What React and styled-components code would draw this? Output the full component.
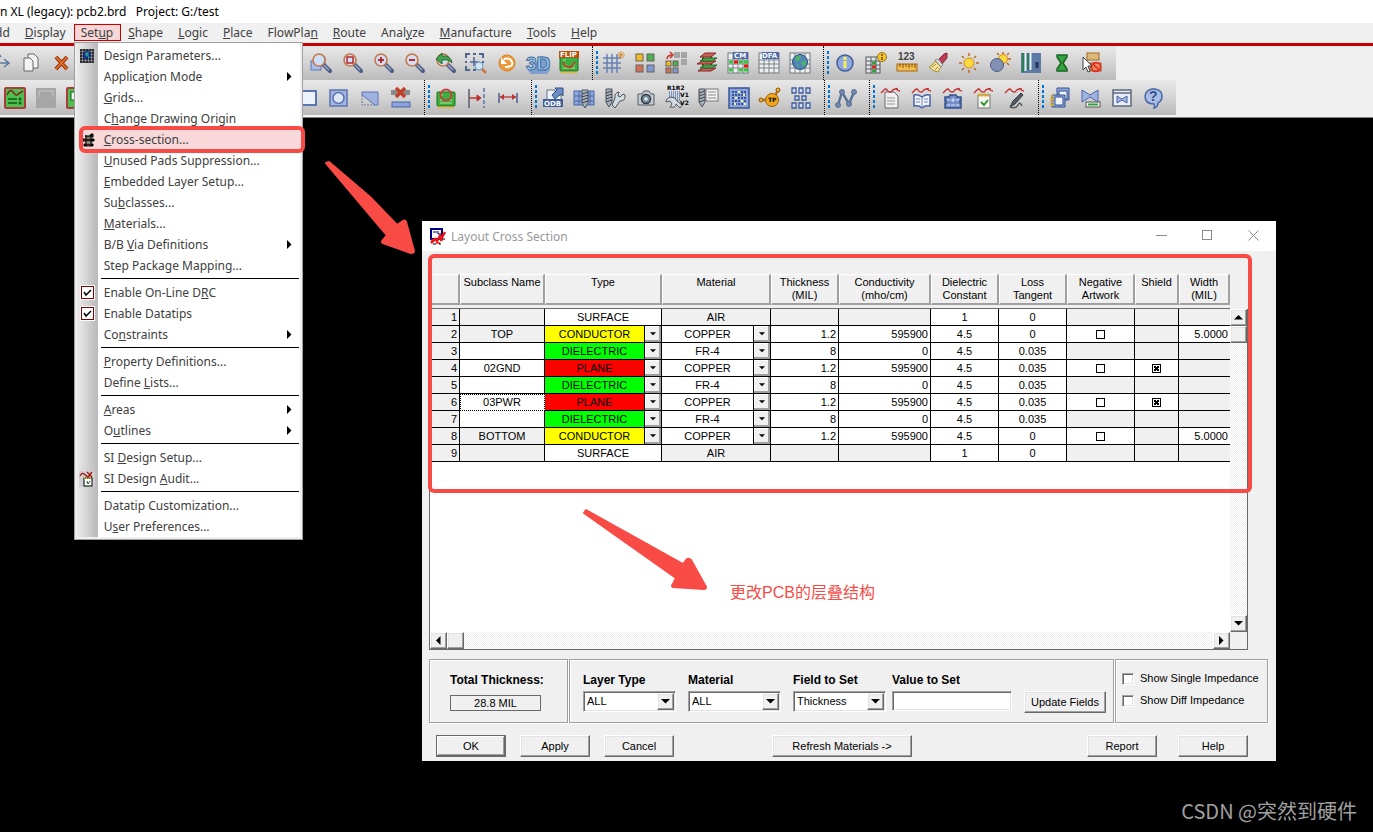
import React, { useState } from 'react';
import styled, { createGlobalStyle, css } from 'styled-components';

const GlobalStyle = createGlobalStyle`
  * {
    box-sizing: border-box;
  }
  body {
    margin: 0;
    background-color: black;
    overflow: hidden;
  }
  button, input, select {
    font: inherit;
    color: inherit;
    margin: 0;
    padding: 0;
  }
`;

const menuFont = css`
  font-family: "Noto Sans", "Open Sans", sans-serif;
  font-size: 12px;
`;

const raised = css`
  background-color: #f0f0f0;
  border: 1px solid;
  border-color: white #696969 #696969 white;
  box-shadow: inset -1px -1px #a0a0a0, inset 1px 1px #e3e3e3;
`;

const sunken = css`
  background-color: white;
  border: 1px solid;
  border-color: #a0a0a0 white white #a0a0a0;
  box-shadow: inset 1px 1px #696969, inset -1px -1px #e3e3e3;
`;

const Page = styled.div`
  position: relative;
  min-height: 100vh;
  background-color: black;
`;

const TitleBar = styled.header`
  height: 23px;
  line-height: 23px;
  background-color: white;
  color: black;
  white-space: pre;
  ${menuFont}
`;

const MenuBar = styled.nav`
  display: flex;
  align-items: flex-start;
  height: 23px;
  padding-top: 1px;
  background-color: #f0f0f0;
  border-bottom: 3px solid #c80000;
  color: #404040;
  ${menuFont}
`;

const MenuEntry = styled.div`
  position: relative;
  &:first-child {
    margin-left: -12px;
  }
`;

const MenuButton = styled.button`
  height: 17px;
  line-height: 15px;
  padding: 0 7px 0 6px;
  border: 1px solid ${({ active }) => (active ? '#c80000' : 'transparent')};
  background-color: ${({ active }) => (active ? '#f6d6d6' : 'transparent')};
`;

const Dropdown = styled.div`
  position: absolute;
  z-index: 5;
  top: 18px;
  left: 0;
  width: 229px;
  padding: 2px 3px 2px 0;
  border: 1px solid #a0a0a0;
  background: linear-gradient(to right, #f0f0f0 0, #b8b8b8 23px, white 23px);
  box-shadow: inset -2px -2px #f0f0f0;
`;

const MenuRow = styled.div`
  display: grid;
  grid-template-columns: 29px 1fr 14px;
  align-items: center;
  height: 21px;
  ${({ active }) =>
    active &&
    `
    position: relative;
    grid-template-columns: 22px 1fr 14px;
    margin: 0 -3px 0 7px;
    padding-right: 3px;
    border-radius: 3px;
    background-color: #f8d8d8;
    outline: 4px solid #f94b46;
    outline-offset: -1px;
  `}
`;

const MenuText = styled.span`
  white-space: nowrap;
  line-height: 21px;
`;

const MenuIcon = styled.span`
  display: flex;
  padding-left: ${({ active }) => (active ? '0' : '4px')};
`;

const MenuRule = styled.hr`
  height: 6px;
  margin: 0 0 0 26px;
  border: 0;
  background: linear-gradient(transparent 2px, black 2px, black 3px, transparent 3px);
`;

const MenuTick = styled.input`
  appearance: none;
  width: 13px;
  height: 13px;
  margin-left: 2px;
  border: 1px solid #800000;
  outline: 1px solid white;
  background-color: white;
`;

const TickMark = styled.svg`
  margin-left: -13px;
  pointer-events: none;
`;

const Toolbars = styled.div`
  background-color: #f0f0f0;
  border-bottom: 1px solid #808080;
  padding-bottom: 2px;
`;

const Toolbar = styled.div`
  display: flex;
  height: ${({ tall }) => (tall ? '35px' : '34px')};
  width: max-content;
  margin-left: ${({ shift }) => shift};
  background: linear-gradient(#e8e8e8, #d4d4d4 50%, #bababa);
`;

const Spacer = styled.div`
  width: ${({ size }) => size}px;
`;

const ToolGroup = styled.div`
  display: flex;
  align-items: center;
  padding-right: 8px;
`;

const Handle = styled.div`
  align-self: stretch;
  width: 6px;
  border-left: 1px dotted black;
  background: repeating-linear-gradient(#0078d7 0 3px, transparent 3px 5px) 3px 5px / 3px 23px no-repeat;
`;

const ToolButton = styled.button`
  display: flex;
  align-items: center;
  align-self: center;
  justify-content: center;
  width: 31px;
  height: 28px;
  border: 0;
  background: none;
`;

const Dialog = styled.section`
  position: absolute;
  top: 221px;
  left: 422px;
  right: 97px;
  background-color: #f0f0f0;
  color: black;
  font-family: "Liberation Sans", Arial, sans-serif;
  font-size: 11px;
  line-height: 13px;
`;

const DialogTitle = styled.div`
  display: flex;
  align-items: center;
  gap: 5px;
  height: 30px;
  padding: 0 0 0 7px;
  background-color: white;
  color: #999999;
  ${menuFont}
`;

const DialogName = styled.h1`
  flex: 1;
  margin: 0;
  font-size: 12px;
  font-weight: normal;
`;

const WindowButton = styled.button`
  display: flex;
  align-items: center;
  justify-content: center;
  width: 46px;
  height: 28px;
  border: 0;
  background: none;
`;

const WindowButtons = styled.div`
  display: flex;
  align-self: flex-start;
`;

const DialogBody = styled.div`
  padding: 23px 8px 4px 7px;
`;

const GridFrame = styled.div`
  position: relative;
  display: grid;
  grid-template-columns: 1fr 18px;
  margin-right: 20px;
`;

const GridMain = styled.div`
  background-color: white;
  border-left: 1px solid #696969;
  min-height: 358px;
`;

const Marker = styled.div`
  position: absolute;
  top: -20px;
  left: -1px;
  right: -4px;
  height: 239px;
  border: 4px solid #f94b46;
  border-radius: 6px;
  pointer-events: none;
`;

const LayerTable = styled.table`
  width: 100%;
  table-layout: fixed;
  border-collapse: separate;
  border-spacing: 0;
`;

const HeadCell = styled.th`
  height: 35px;
  padding: 0 0 3px;
  background-color: #f0f0f0;
  border-bottom: 1px solid #696969;
  font-weight: normal;
  vertical-align: top;
`;

const HeadLabel = styled.div`
  height: 31px;
  padding-top: 1px;
  border: solid;
  border-width: 1px 2px 2px 1px;
  border-color: white #a0a0a0 #a0a0a0 white;
  white-space: pre-line;
`;

const Cell = styled.td`
  height: 17px;
  padding: 0 ${({ align }) => (align === 'right' ? '2px' : '0')} 0 0;
  border: solid black;
  border-width: 0 1px 1px 0;
  background-color: ${({ off }) => (off ? '#f0f0f0' : 'white')};
  text-align: ${({ align }) => align || 'center'};
  line-height: 16px;
  ${({ focused }) =>
    focused && 'border-color: white; outline: 1px dotted black; outline-offset: -1px;'}
  &:last-child {
    border-right: 0;
  }
`;

const CellPick = styled.div`
  position: relative;
  display: flex;
  height: 16px;
`;

const CellSelect = styled.select`
  appearance: none;
  width: 100%;
  height: 16px;
  padding-right: 17px;
  border: 0;
  border-radius: 0;
  background-color: ${({ fill }) => fill};
  line-height: 16px;
  text-align: center;
  text-align-last: center;
`;

const CellArrow = styled.span`
  position: absolute;
  top: 0;
  right: 0;
  display: flex;
  align-items: center;
  justify-content: center;
  width: 17px;
  height: 16px;
  border-left: 1px solid black;
  background-color: #f0f0f0;
  box-shadow: inset -2px -2px #a0a0a0, inset 1px 1px white;
  pointer-events: none;
`;

const CellBox = styled.input`
  appearance: none;
  display: block;
  width: 9px;
  height: 9px;
  margin: 0 auto;
  border: 1px solid black;
  background-color: white;
  &:checked {
    background:
      linear-gradient(45deg, transparent 35%, black 35%, black 65%, transparent 65%) 1px 1px / 5px 5px no-repeat,
      linear-gradient(-45deg, transparent 35%, black 35%, black 65%, transparent 65%) 1px 1px / 5px 5px no-repeat,
      white;
  }
`;

const dither = css`
  background: repeating-conic-gradient(white 0 25%, #f0f0f0 0 50%) 0 0 / 2px 2px;
`;

const VerticalScroll = styled.div`
  display: flex;
  flex-direction: column;
  margin-top: 35px;
  border-right: 1px solid #696969;
  ${dither}
`;

const HorizontalScroll = styled.div`
  display: flex;
  border-left: 1px solid #696969;
  border-bottom: 1px solid #696969;
  ${dither}
`;

const ScrollCorner = styled.div`
  border: solid #696969;
  border-width: 0 1px 1px 0;
  background-color: #f0f0f0;
`;

const ScrollButton = styled.button`
  display: flex;
  align-items: center;
  justify-content: center;
  width: 17px;
  height: 17px;
  ${raised}
`;

const Track = styled.div`
  flex: 1;
`;

const Panels = styled.div`
  display: flex;
  gap: 1px;
  margin-top: 9px;
`;

const Panel = styled.div`
  display: flex;
  height: 64px;
  border: 1px solid #a0a0a0;
  box-shadow: inset 1px 1px white, 1px 1px white;
`;

const TotalPanel = styled(Panel)`
  flex-direction: column;
  width: 139px;
  padding: 13px 0 0 20px;
`;

const SetPanel = styled(Panel)`
  flex: 1;
  align-items: flex-start;
  padding: 13px 7px 0 13px;
`;

const ShowPanel = styled(Panel)`
  flex-direction: column;
  gap: 9px;
  width: 153px;
  padding: 12px 0 0 6px;
`;

const FieldName = styled.label`
  height: 14px;
  font-size: 12px;
  font-weight: bold;
  line-height: 14px;
  white-space: nowrap;
`;

const TotalValue = styled.output`
  width: 91px;
  height: 16px;
  margin-top: 8px;
  border: 1px solid #696969;
  line-height: 14px;
  text-align: center;
`;

const Field = styled.div`
  position: relative;
  display: flex;
  flex-direction: column;
  gap: 4px;
  width: 93px;
  margin-right: 12px;
`;

const ValueField = styled(Field)`
  flex: 1;
  margin-left: -6px;
`;

const Select = styled.select`
  appearance: none;
  height: 21px;
  padding: 0 20px 0 3px;
  border-radius: 0;
  ${sunken}
`;

const SelectArrow = styled.span`
  position: absolute;
  right: 2px;
  bottom: 2px;
  display: flex;
  align-items: center;
  justify-content: center;
  width: 17px;
  height: 17px;
  pointer-events: none;
  ${raised}
`;

const TextBox = styled.input`
  width: 100%;
  height: 20px;
  padding: 0 4px;
  ${sunken}
`;

const Button = styled.button`
  width: ${({ wide }) => (wide ? '140px' : '70px')};
  height: 22px;
  ${raised}
  ${({ main }) =>
    main &&
    `
    border-color: #696969;
    box-shadow: inset -1px -1px #696969, inset 1px 1px white, inset -2px -2px #a0a0a0;
  `}
`;

const UpdateButton = styled(Button)`
  width: 82px;
  margin-top: 18px;
`;

const ShowLine = styled.label`
  display: flex;
  align-items: center;
  gap: 6px;
  height: 13px;
  white-space: nowrap;
`;

const ShowBox = styled.input`
  appearance: none;
  width: 12px;
  height: 12px;
  ${sunken}
`;

const ButtonRow = styled.div`
  display: flex;
  gap: 14px;
  padding: 12px 20px 0 7px;
`;

const MiddleButtons = styled.div`
  margin-left: 84px;
`;

const RightButtons = styled.div`
  display: flex;
  gap: 21px;
  margin-left: auto;
`;

const Arrow = styled.svg`
  position: absolute;
  top: ${({ y }) => y}px;
  left: ${({ x }) => x}px;
  pointer-events: none;
`;

const Note = styled.p`
  position: absolute;
  top: 581px;
  left: 730px;
  margin: 0;
  color: #f94b46;
  font-family: "Liberation Sans", "Noto Sans CJK SC", sans-serif;
  font-size: 16px;
  line-height: 24px;
`;

const Watermark = styled.footer`
  position: absolute;
  right: 16px;
  bottom: 6px;
  color: #a0a0a0;
  font-family: "Noto Sans CJK SC", sans-serif;
  font-size: 20px;
  line-height: 30px;
`;

/* ---- icons, all on a 24 x 24 canvas ---- */

const tiny = { fontFamily: 'DejaVu Sans', fontWeight: 'bold' };

const Lens = ({ children }) => (
  <g>
    <path d="M14 13l7 7" stroke="#4c5a80" strokeWidth="4" strokeLinecap="round" />
    <path d="M15 14l5 5" stroke="#9dabd0" strokeWidth="1.5" />
    <circle cx="10" cy="9" r="6" fill="#cfdff5" stroke="#c57846" strokeWidth="1.6" />
    {children}
  </g>
);

const Board = () => (
  <g>
    <rect x="3" y="6" width="18" height="14" rx="1" fill="#3fae3f" stroke="#16731b" />
    <path d="M4 21.5h16" stroke="#e2b424" strokeWidth="2" strokeDasharray="2 1" />
    <path d="M6 9h3M6 17h12M6 14h4M15 14h3" stroke="#aee69b" />
  </g>
);

const Table = () => (
  <g>
    <rect x="2" y="2" width="20" height="20" fill="#eef0f0" stroke="#707880" />
    <path d="M2 9h20M2 13h20M2 17h20M7 2v20M12 2v20M17 2v20" stroke="#7c838a" />
  </g>
);

const Screw = () => (
  <g>
    <path d="M3 3h6v13l-3 5-3-5z" fill="#aab3bd" stroke="#4b535c" />
    <path d="M3 7l6-2M3 10l6-2M3 13l6-2M3 16l6-2" stroke="#3d444c" />
  </g>
);

const Wave = () => (
  <path d="M2 7q1-1 3-3t3 0 3 2 2-1 3-2 2 0 3 2" fill="none" stroke="#c52f2f" strokeWidth="1.4" />
);

const Grip = ({ x, y, fill }) => (
  <rect x={x} y={y} width="7" height="7" fill={fill} stroke="#66605a" />
);

const ICONS = {
  move: <path d="M2 12h18M16 8l5 4-5 4M10 3v18M7 6l3-4 3 4" stroke="#5c7aa0" strokeWidth="1.6" />,
  copy: (
    <g fill="#f4f4f4" stroke="#666">
      <path d="M9 3h6l4 4v10H9z" />
      <path d="M5 7h6l3 3v10H5z" />
    </g>
  ),
  delete: (
    <g>
      <path d="M6 6l11 12M17 6L6 18" stroke="#8a2f0a" strokeWidth="4" />
      <path d="M6 6l11 12M17 6L6 18" stroke="#e06a25" strokeWidth="2" />
    </g>
  ),
  waveBoard: (
    <g>
      <rect x="2" y="2" width="20" height="20" rx="1" fill="#4fbf4f" stroke="#a83b3b" strokeWidth="2" />
      <path d="M4 9q3-7 6-3t4 3 6-4" stroke="#7d2a1e" strokeWidth="1.5" />
      <path d="M5 13h9M5 17h9" stroke="#145a18" strokeWidth="1.5" />
      <circle cx="17" cy="13" r="1.5" fill="#145a18" />
      <circle cx="17" cy="17" r="1.5" fill="#145a18" />
    </g>
  ),
  disabled: (
    <g>
      <rect x="2" y="2" width="20" height="20" fill="#a6a6a6" />
      <path d="M5 11V5h14v6" stroke="#c8c8c8" />
    </g>
  ),
  greenBoard: (
    <g>
      <rect x="2" y="2" width="20" height="20" rx="1" fill="#4fbf4f" stroke="#a83b3b" strokeWidth="2" />
      <rect x="6" y="6" width="10" height="8" fill="#eef5ee" stroke="#145a18" />
    </g>
  ),
  zoomPoints: (
    <g>
      <path d="M7 6h9v9H7z" fill="#a9bde6" stroke="#5c77b8" />
      <rect x="2" y="10" width="10" height="9" fill="#a9bde6" stroke="#5c77b8" />
      <Lens />
    </g>
  ),
  zoomFit: (
    <Lens>
      <rect x="7" y="6" width="6" height="6" stroke="#b92b2b" strokeWidth="1.5" />
    </Lens>
  ),
  zoomIn: (
    <Lens>
      <path d="M10 6v6M7 9h6" stroke="#b92b2b" strokeWidth="2" />
    </Lens>
  ),
  zoomOut: (
    <Lens>
      <path d="M7 9h6" stroke="#b92b2b" strokeWidth="2" />
    </Lens>
  ),
  zoomPrevious: (
    <Lens>
      <path d="M3 8l6-6v3q9-1 10 7-3-4-10-3v4z" fill="#43a552" stroke="#1d6a2a" />
    </Lens>
  ),
  zoomCenter: (
    <g>
      <path d="M2 7V3h4M15 3h4v4M2 15v4h4M9 3h3M9 19h3M2 10v2M19 10v2" stroke="#4d6791" strokeWidth="2" />
      <path d="M10 6v9M6 11h9" stroke="#4d6791" strokeWidth="1.5" />
      <circle cx="15" cy="15" r="4" fill="#cfe6f7" stroke="#6a93bd" />
      <path d="M18 18l4 4" stroke="#c57846" strokeWidth="2.5" />
    </g>
  ),
  redraw: (
    <g>
      <circle cx="12" cy="12" r="8" fill="#ee9a3a" stroke="#d98024" />
      <path d="M9 8q6-2 8 3t-7 5" stroke="white" strokeWidth="2" />
      <path d="M6 6v7h6z" fill="white" />
    </g>
  ),
  view3d: (
    <g fontFamily="Liberation Sans" fontWeight="bold" fontSize="19">
      <path d="M15 5l7 1 2 3v10l-3 4H5l-3-3z" fill="#7f9fcd" />
      <text x="0" y="19" fill="#a9cbe8" stroke="#3d6ea5" strokeWidth="1">3D</text>
    </g>
  ),
  flip: (
    <g>
      <Board />
      <path d="M6 11q2 6 8 5l4-5" stroke="#b3472a" strokeWidth="2" />
      <rect x="2" y="0" width="20" height="7" fill="#b5520e" />
      <text x="3" y="6" fontSize="7" fill="white" {...tiny}>FLIP</text>
    </g>
  ),
  gridBurst: (
    <g>
      <path d="M1 7h18M1 12h18M1 17h18M5 3v19M10 3v19M15 3v19" stroke="#6681b5" strokeWidth="1.5" />
      <path d="M19 0v8M15 4h8M16 1l6 6M22 1l-6 6" stroke="#d68f35" />
    </g>
  ),
  fourTiles: (
    <g>
      <Grip x="3" y="3" fill="#f2bc24" />
      <Grip x="14" y="3" fill="#4caf50" />
      <Grip x="3" y="14" fill="#d0705a" />
      <Grip x="14" y="14" fill="#7f98d6" />
    </g>
  ),
  moveTiles: (
    <g>
      <path d="M10 1h6v6h-6zM17 1h6v6h-6zM17 8h6v6h-6z" fill="#a5a5a5" />
      <rect x="2" y="10" width="5" height="5" fill="#f2bc24" stroke="#66605a" />
      <rect x="9" y="10" width="5" height="5" fill="#4caf50" stroke="#66605a" />
      <rect x="2" y="17" width="5" height="5" fill="#d0705a" stroke="#66605a" />
      <rect x="9" y="17" width="5" height="5" fill="#7f98d6" stroke="#66605a" />
      <path d="M3 8q0-4 6-4M6 1l3 3-3 3" stroke="#c43c32" strokeWidth="1.6" />
    </g>
  ),
  layers: (
    <g strokeWidth="1">
      <path d="M8 4v14M16 5v14" stroke="#1d7a2a" strokeWidth="2" />
      <path d="M3 20l5-3h13l-5 3z" fill="#cc6156" stroke="#8a2626" />
      <path d="M5 17l5-3h12l-5 3z" fill="#4caf50" stroke="#1d6a2a" />
      <path d="M2 13l5-3h14l-5 3z" fill="#cc6156" stroke="#8a2626" />
      <path d="M5 10l5-3h12l-5 3z" fill="#4caf50" stroke="#1d6a2a" />
      <path d="M5 6l5-4h11l-5 4z" fill="#cc6156" stroke="#8a2626" />
    </g>
  ),
  cm: (
    <g>
      <Table />
      <path d="M13 11h4M3 11h4M3 19h4M18 11h4M13 19h4M18 19h4" stroke="#32c53c" strokeWidth="3" />
      <path d="M8 11h4M18 15h4" stroke="#ee1010" strokeWidth="3" />
      <rect x="7" y="1" width="15" height="7" fill="#4d6bab" />
      <text x="8" y="7" fontSize="7" fill="white" {...tiny}>CM</text>
    </g>
  ),
  dfa: (
    <g>
      <Table />
      <rect x="5" y="1" width="17" height="7" fill="#4d6bab" />
      <text x="5" y="7" fontSize="7" fill="white" {...tiny}>DFA</text>
    </g>
  ),
  world: (
    <g>
      <Table />
      <circle cx="12" cy="11" r="7.5" fill="#5282bb" stroke="#2c517e" />
      <path d="M7 7q3-4 6-2l-1 4-4 2zM13 11l5-2q1 5-3 7zM8 13l3 1v3z" fill="#4fb268" />
    </g>
  ),
  info: (
    <g>
      <circle cx="12" cy="12" r="8" fill="#8fa9e0" stroke="#415c96" strokeWidth="1.5" />
      <path d="M12 10v7M12 6v3" stroke="#f7ee50" strokeWidth="3" />
    </g>
  ),
  sheetInfo: (
    <g>
      <rect x="2" y="6" width="14" height="16" fill="#e4e6e6" stroke="#565c62" />
      <path d="M2 10h14M2 14h14M2 18h14M7 6v16M12 6v16" stroke="#565c62" />
      <path d="M8 12h4M8 20h4" stroke="#32a53c" strokeWidth="3" />
      <path d="M8 16h4" stroke="#dd2020" strokeWidth="3" />
      <circle cx="18" cy="6" r="4.500" fill="#f3c62e" stroke="#9d7414" />
      <path d="M18 3v2M18 6v3" stroke="#6a4c08" strokeWidth="1.5" />
    </g>
  ),
  measure: (
    <g>
      <text x="3" y="9" fontSize="10" fill="#444" fontFamily="Liberation Sans" fontWeight="bold">123</text>
      <rect x="2" y="13" width="20" height="7" fill="#f2c04a" stroke="#a56418" />
      <path d="M5 13v3M8 13v4M11 13v3M14 13v4M17 13v3M20 13v4" stroke="#80490c" />
    </g>
  ),
  brush: (
    <g>
      <path d="M12 9l6-6 3-1v5l-5 6z" fill="#b93c52" stroke="#8e2438" />
      <path d="M9 9l3-1 5 6-2 2z" fill="#d9dde4" stroke="#8a8f98" />
      <path d="M9 10l6 6-3 5-4-1-5-4q3-1 6-6z" fill="#f2df98" stroke="#a98f3b" />
      <path d="M6 16l4-3M9 19l3-3" stroke="#a98f3b" />
    </g>
  ),
  sun: (
    <g>
      <path d="M12 2v3M12 19v3M2 12h3M19 12h3M5 5l2 2M17 17l2 2M19 5l-2 2M7 17l-2 2" stroke="#bb6a24" strokeWidth="1.5" />
      <circle cx="12" cy="12" r="5" fill="#ffd83a" stroke="#d8891f" />
    </g>
  ),
  eclipse: (
    <g>
      <path d="M15 1v2M20 8h3M19 4l2-2M11 4L9 2M19 12l2 2" stroke="#bb6a24" strokeWidth="1.5" />
      <circle cx="15" cy="8" r="4.5" fill="#ffd83a" stroke="#d8891f" />
      <circle cx="9" cy="14" r="6.5" fill="#8291b3" stroke="#4c5b82" />
    </g>
  ),
  bands: (
    <g>
      <rect x="2" y="2" width="20" height="20" fill="#5d79a6" />
      <path d="M4 2v19M9 2v17" stroke="#2b7d54" strokeWidth="2" />
      <path d="M6.500 2v18M11.500 2v17" stroke="#e6f0f4" strokeWidth="2" />
      <path d="M18 11v6" stroke="#243457" strokeWidth="3" />
    </g>
  ),
  hourglass: <path d="M7 4h10v2l-4 6 4 6v2H7v-2l4-6-4-6z" fill="#35a33f" stroke="#166420" strokeWidth="1.5" />,
  noPick: (
    <g>
      <rect x="6" y="2" width="12" height="7" fill="#dcb878" stroke="#a56a2a" />
      <rect x="9" y="12" width="11" height="8" fill="#e0915a" stroke="#a5502a" />
      <circle cx="15" cy="16" r="4.5" stroke="#f02020" strokeWidth="1.5" />
      <path d="M12 13l6 6" stroke="#f02020" strokeWidth="1.5" />
      <path d="M2 6v13l3-3 2 5 2-1-2-5h4z" fill="white" stroke="#444" />
    </g>
  ),
  shapeRect: <rect x="3" y="5" width="17" height="14" fill="#eef2fa" stroke="#5a74b4" strokeWidth="2" />,
  shapeCircle: (
    <g stroke="#5a74b4" strokeWidth="1.5">
      <rect x="3" y="4" width="17" height="16" fill="#a4b6e0" />
      <circle cx="11.5" cy="12" r="5.5" fill="#dfe6f5" />
    </g>
  ),
  shapeCorner: (
    <g>
      <path d="M4 6h16v13h-3L4 9z" fill="#9fb2df" stroke="#5a74b4" />
      <path d="M4 9v10h13" stroke="#6e7f9e" strokeDasharray="2 1" />
    </g>
  ),
  shapeDelete: (
    <g>
      <rect x="2" y="4" width="19" height="5" fill="#8c8c8c" />
      <path d="M7 2l9 9M16 2l-9 9" stroke="#c2412d" strokeWidth="3.5" />
      <rect x="3" y="16" width="18" height="5" fill="#8ba4dd" stroke="#4b66a4" />
    </g>
  ),
  boardCircle: (
    <g>
      <Board />
      <circle cx="12" cy="9" r="5.5" stroke="#c8403a" strokeWidth="1.8" />
    </g>
  ),
  snapArrow: (
    <g>
      <path d="M4 3v19" stroke="#55606e" strokeWidth="1.5" />
      <path d="M19 2v20" stroke="#5a74b4" strokeWidth="1.5" strokeDasharray="4 2" />
      <path d="M4 12h9" stroke="#b93232" strokeWidth="1.5" />
      <path d="M12 9v6l4-3z" fill="#b93232" stroke="#b93232" />
    </g>
  ),
  dimension: (
    <g>
      <path d="M3 7v10M21 7v10" stroke="#4c5f8c" strokeWidth="1.5" />
      <path d="M4 11h16" stroke="#b93232" strokeWidth="1.3" />
      <path d="M8 8v6l-4-3zM16 8v6l4-3z" fill="#b93232" />
    </g>
  ),
  odb: (
    <g>
      <path d="M6 4h8v5h6v9H6z" fill="#eef1f6" stroke="#6b7585" />
      <path d="M11 9l5-5-2-2h8v8l-2-2-6 5z" fill="#6c8cc4" stroke="#32507f" />
      <rect x="2" y="13" width="20" height="8" fill="#3f5f9c" />
      <text x="3" y="20" fontSize="7" fill="white" {...tiny}>ODB</text>
    </g>
  ),
  drillGrid: (
    <g>
      <rect x="2" y="5" width="20" height="14" fill="#8ea9da" stroke="#4b66a4" />
      <path d="M2 10h20M2 15h20M7 5v14M18 5v14" stroke="#4b66a4" />
      <g transform="translate(7 1)">
        <Screw />
      </g>
    </g>
  ),
  drillWrench: (
    <g>
      <Screw />
      <path d="M20 8l-3 3-2-1 1-4q-5 1-4 6l-3 7 3 3 5-7q6 0 5-6z" fill="#d5dbe3" stroke="#4b535c" />
    </g>
  ),
  camera: (
    <g>
      <path d="M4 8h4l2-3h5l2 3h3v11H4z" fill="#c4c9cf" stroke="#555c64" />
      <circle cx="12" cy="13" r="4.5" fill="#76889c" stroke="#333a42" strokeWidth="1.5" />
      <circle cx="12" cy="13" r="1.8" fill="#dfe9f4" />
    </g>
  ),
  refdes: (
    <g>
      <path d="M4 6h11M4 8h11M4 10h11M6 12h9M8 14h7" stroke="#5f80c0" strokeDasharray="1 1" strokeWidth="1.5" />
      <path d="M6 11q-5 1-5 5l4-1 2 3-2 3q6 1 6-3l4 4 2-3-5-4q-1-4-6-4z" fill="#d5dbe3" stroke="#4b535c" />
      <text x="2" y="4" fontSize="6" fill="black" {...tiny}>R1R2</text>
      <text x="15" y="11" fontSize="6" fill="black" {...tiny}>V1</text>
      <text x="15" y="19" fontSize="6" fill="black" {...tiny}>V2</text>
    </g>
  ),
  drillSheet: (
    <g>
      <Screw />
      <rect x="10" y="3" width="12" height="12" fill="#f4f4f4" stroke="#777" />
      <path d="M12 6h8M12 9h8M12 12h8" stroke="#888" />
    </g>
  ),
  panel: (
    <g>
      <rect x="2" y="2" width="20" height="20" fill="#8ca6dc" stroke="#3a5596" strokeWidth="1.5" />
      <path d="M5 6h14M5 9h14M5 12h14M5 15h14M5 18h14" stroke="#3a5596" strokeWidth="2" strokeDasharray="2 1" />
      <path d="M11 6h2M16 9h2M8 12h2M14 15h2M7 18h2M17 18h2" stroke="#f5eda0" strokeWidth="2" />
    </g>
  ),
  testPoint: (
    <g>
      <path d="M3 14h6M17 10l3-6" stroke="#b77313" strokeWidth="2.5" />
      <circle cx="3" cy="14" r="2" fill="#f4b63a" stroke="#8a5408" />
      <circle cx="20" cy="4" r="2" fill="#f4b63a" stroke="#8a5408" />
      <circle cx="14" cy="14" r="6.5" fill="#f2a71b" stroke="#9a5f0b" />
      <text x="10" y="16" fontSize="6" fill="black" {...tiny}>TP</text>
    </g>
  ),
  pinArray: (
    <path
      d="M3 2h4v5H3zM10 2h4v5h-4zM17 2h4v5h-4zM6 10h4v4H6zM13 10h4v4h-4zM3 17h4v5H3zM10 17h4v5h-4zM17 17h4v5h-4z"
      fill="#cfdcf5"
      stroke="#3f5c9b"
      strokeWidth="1.3"
    />
  ),
  net: (
    <g fill="#7289ac" stroke="#5a7296">
      <path d="M4 19L8 6l7 12 5-12" fill="none" strokeWidth="2.5" />
      <circle cx="4" cy="19" r="2.500" />
      <circle cx="8" cy="6" r="2.500" />
      <circle cx="15" cy="18" r="2.500" />
      <circle cx="20" cy="6" r="2.500" />
    </g>
  ),
  waveSheet: (
    <g>
      <path d="M6 6h9l4 4v12H6z" fill="#f0f0f0" stroke="#666" />
      <path d="M8 12h8M8 15h8M8 18h8" stroke="#999" />
      <Wave />
    </g>
  ),
  waveBook: (
    <g>
      <path d="M4 9q4-1 8 2 4-3 8-2v11q-5-1-8 2-3-3-8-2z" fill="#f2f5fb" stroke="#4b66a4" strokeWidth="1.5" />
      <path d="M12 11v11M6 13h4M6 16h4M14 13h4M14 16h4" stroke="#6c82b5" />
      <Wave />
    </g>
  ),
  waveChip: (
    <g>
      <path d="M4 11h4l1-2h6l1 2h4v4h-1v2h1v5H4v-5h1v-2H4z" fill="#7690c9" stroke="#34508c" strokeWidth="1.5" />
      <path d="M6 14h3M15 14h3M6 19h3M15 19h3M10 19h4M12 12v4M10 14h4" stroke="#dfe6f6" />
      <Wave />
    </g>
  ),
  waveCheck: (
    <g>
      <rect x="6" y="9" width="12" height="13" fill="#f6f6f0" stroke="#777" />
      <path d="M6 9h12" stroke="#d9a923" strokeWidth="3" strokeDasharray="2 1" />
      <path d="M9 16l3 3 4-5" stroke="#2a9637" strokeWidth="2" />
      <Wave />
    </g>
  ),
  waveProbe: (
    <g>
      <path d="M18 7l-8 8-3 6 5-3 8-9z" fill="#555c64" stroke="#333a42" />
      <path d="M7 21q6 2 8-2t4 1" stroke="#555" strokeWidth="1.5" />
      <Wave />
    </g>
  ),
  notebooks: (
    <g stroke="#34508c">
      <path d="M9 2h12v12H9z" fill="#8fa8dd" />
      <path d="M11 5h8v8h-8z" fill="#f0f4fb" />
      <path d="M4 9h13v12H4z" fill="#8fa8dd" />
      <path d="M7 11h8v8H7z" fill="#f0f4fb" />
      <path d="M4 9v12" stroke="#d9a923" strokeWidth="3" strokeDasharray="2 1" />
    </g>
  ),
  valveBar: (
    <g>
      <path d="M3 4l8 5 8-5v12l-8-5-8 5z" fill="#9fb4e2" stroke="#4b66a4" />
      <rect x="7" y="16" width="14" height="5" fill="#f5f5f5" stroke="#555" />
      <path d="M9 18.500h10" stroke="#2fa53c" strokeWidth="2" />
    </g>
  ),
  valveWindow: (
    <g>
      <rect x="3" y="4" width="18" height="16" fill="#e9edf4" stroke="#5d6a80" strokeWidth="1.5" />
      <path d="M3 7h18" stroke="#5d6a80" strokeWidth="1.5" />
      <path d="M7 10l5 3 5-3v7l-5-3-5 3z" fill="#9fb4e2" stroke="#4b66a4" />
    </g>
  ),
  help: (
    <g>
      <path d="M11 3h3q7 1 7 7 0 5-4 7 0 4-4 5 1-3 0-4-9 0-9-8 1-6 7-7z" fill="#a9bce6" stroke="#4b66a4" strokeWidth="1.5" />
      <text x="8" y="15" fontSize="14" fill="#34508c" fontFamily="Liberation Sans" fontWeight="bold">?</text>
    </g>
  ),
};

const Icon = ({ name }) => (
  <svg width="24" height="24" viewBox="0 0 24 24" overflow="visible" fill="none" aria-hidden="true">
    {ICONS[name]}
  </svg>
);

const Triangle = ({ dir = 'down', small }) => {
  const paths = {
    down: 'M0 2h9L4.5 6.5z',
    up: 'M0 6.5h9L4.5 2z',
    left: 'M6.5 0v9L2 4.5z',
    right: 'M2 0v9l4.5-4.5z',
  };
  const size = small ? 6 : 9;
  return (
    <svg width={size} height={size} viewBox="0 0 9 9" aria-hidden="true">
      <path d={paths[dir]} fill="black" />
    </svg>
  );
};

const designIcon = (
  <svg width="16" height="16" viewBox="0 0 16 16" aria-hidden="true">
    <rect x="1" y="1" width="14" height="14" fill="#b8bcc8" />
    <path d="M1 2h14M1 5h14M1 8h14M1 11h14M1 14h14M2 1v14M5 1v14M8 1v14M11 1v14M14 1v14" stroke="black" />
    <circle cx="8" cy="7" r="4" fill="#1a2a90" />
    <path d="M6 5l3-1 1 3-3 2zM9 8l2 1-2 2z" fill="#20a080" />
  </svg>
);

const crossIcon = (
  <svg width="14" height="16" viewBox="0 0 14 16" aria-hidden="true">
    <path d="M3 4h4l2-2h2v3H4zM1 7h11v2H1zM2 12h9v2H2z" fill="black" stroke="black" />
    <path d="M4 4h6M3 10h8" stroke="#2f7e3c" />
    <path d="M2 8h6M4 13h5" stroke="#a03030" />
    <path d="M4 3v11M9 3v11" stroke="black" />
  </svg>
);

const auditIcon = (
  <svg width="16" height="16" viewBox="0 0 16 16" aria-hidden="true">
    <rect width="16" height="16" fill="#d0d0d0" />
    <rect x="5" y="7" width="8" height="8" fill="white" stroke="black" />
    <path d="M5 7h8" stroke="#d9a923" strokeWidth="2" strokeDasharray="1 1" />
    <path d="M8 10l1 3 2-3" fill="none" stroke="#106020" />
    <path d="M1 5q2-4 4-2l4 3 4-5M8 1l5 5" fill="none" stroke="#a01010" strokeWidth="1.3" />
  </svg>
);

const MENUS = ['dd', '&Display', 'Set&up', '&Shape', '&Logic', '&Place', 'FlowPla&n', '&Route', 'Anal&yze', '&Manufacture', '&Tools', '&Help'];

const SETUP_ITEMS = [
  { text: 'Desi&gn Parameters...', icon: designIcon },
  { text: 'Applica&tion Mode', more: true },
  { text: '&Grids...' },
  { text: 'C&hange Drawing Origin' },
  { text: '&Cross-section...', icon: crossIcon, active: true },
  { text: '&Unused Pads Suppression...' },
  { text: '&Embedded Layer Setup...' },
  { text: 'Su&bclasses...' },
  { text: '&Materials...' },
  { text: 'B/B &Via Definitions', more: true },
  { text: 'Step Package Mapping...' },
  null,
  { text: 'Enable On-Line D&RC', tick: 'drc' },
  { text: 'Enable Datatips', tick: 'datatips' },
  { text: 'Co&nstraints', more: true },
  null,
  { text: '&Property Definitions...' },
  { text: 'Define &Lists...' },
  null,
  { text: '&Areas', more: true },
  { text: 'O&utlines', more: true },
  null,
  { text: 'SI &Design Setup...' },
  { text: 'SI Design &Audit...', icon: auditIcon },
  null,
  { text: 'Datatip Customization...' },
  { text: 'U&ser Preferences...' },
];

const TOP_TOOLS = [
  ['zoomPoints', 'zoomFit', 'zoomIn', 'zoomOut', 'zoomPrevious', 'zoomCenter', 'redraw', 'view3d', 'flip'],
  ['gridBurst', 'fourTiles', 'moveTiles', 'layers', 'cm', 'dfa', 'world'],
  ['info', 'sheetInfo', 'measure', 'brush', 'sun', 'eclipse', 'bands', 'hourglass', 'noPick'],
];

const BOTTOM_TOOLS = [
  ['shapeRect', 'shapeCircle', 'shapeCorner', 'shapeDelete'],
  ['boardCircle', 'snapArrow', 'dimension'],
  ['odb', 'drillGrid', 'drillWrench', 'camera', 'refdes', 'drillSheet', 'panel', 'testPoint', 'pinArray'],
  ['net'],
  ['waveSheet', 'waveBook', 'waveChip', 'waveCheck', 'waveProbe'],
  ['notebooks', 'valveBar', 'valveWindow', 'help'],
];

const COLUMNS = [
  ['', 30],
  ['Subclass Name', 85],
  ['Type', 117],
  ['Material', 109],
  ['Thickness\n(MIL)', 68],
  ['Conductivity\n(mho/cm)', 92],
  ['Dielectric\nConstant', 68],
  ['Loss\nTangent', 68],
  ['Negative\nArtwork', 68],
  ['Shield', 44],
  ['Width\n(MIL)'],
];

const FILLS = { CONDUCTOR: '#ffff00', DIELECTRIC: '#00ff00', PLANE: '#ff0000' };

const LAYERS = [
  { type: 'SURFACE', material: 'AIR', dielectric: '1', loss: '0' },
  { name: 'TOP', type: 'CONDUCTOR', material: 'COPPER', thickness: '1.2', conductivity: '595900', dielectric: '4.5', loss: '0', width: '5.0000' },
  { type: 'DIELECTRIC', material: 'FR-4', thickness: '8', conductivity: '0', dielectric: '4.5', loss: '0.035' },
  { name: '02GND', type: 'PLANE', material: 'COPPER', thickness: '1.2', conductivity: '595900', dielectric: '4.5', loss: '0.035' },
  { type: 'DIELECTRIC', material: 'FR-4', thickness: '8', conductivity: '0', dielectric: '4.5', loss: '0.035' },
  { name: '03PWR', type: 'PLANE', material: 'COPPER', thickness: '1.2', conductivity: '595900', dielectric: '4.5', loss: '0.035', focused: true },
  { type: 'DIELECTRIC', material: 'FR-4', thickness: '8', conductivity: '0', dielectric: '4.5', loss: '0.035' },
  { name: 'BOTTOM', type: 'CONDUCTOR', material: 'COPPER', thickness: '1.2', conductivity: '595900', dielectric: '4.5', loss: '0', width: '5.0000' },
  { type: 'SURFACE', material: 'AIR', dielectric: '1', loss: '0' },
];

// "&" marks the letter that gets the underline
const Hotkey = ({ text }) => {
  const at = text.indexOf('&');
  if (at < 0) return text;
  return (
    <>
      {text.slice(0, at)}
      <u>{text[at + 1]}</u>
      {text.slice(at + 2)}
    </>
  );
};

const SetupMenu = () => {
  const [ticks, setTicks] = useState({ drc: true, datatips: true });
  return (
    <Dropdown>
      {SETUP_ITEMS.map((item, index) =>
        item === null ? (
          <MenuRule key={index} />
        ) : (
          <MenuRow key={index} active={item.active}>
            <MenuIcon active={item.active}>
              {item.icon}
              {item.tick && (
                <>
                  <MenuTick
                    id={item.tick}
                    type="checkbox"
                    checked={ticks[item.tick]}
                    onChange={e => setTicks({ ...ticks, [item.tick]: e.target.checked })}
                  />
                  {ticks[item.tick] && (
                    <TickMark width="13" height="13" viewBox="0 0 13 13">
                      <path d="M3 6l2 3 5-5" fill="none" stroke="black" strokeWidth="1.5" />
                    </TickMark>
                  )}
                </>
              )}
            </MenuIcon>
            <MenuText as={item.tick ? 'label' : 'span'} htmlFor={item.tick}>
              <Hotkey text={item.text} />
            </MenuText>
            {item.more && <Triangle dir="right" />}
          </MenuRow>
        )
      )}
    </Dropdown>
  );
};

const Tools = ({ names }) =>
  names.map(name => (
    <ToolButton key={name} type="button" aria-label={name}>
      <Icon name={name} />
    </ToolButton>
  ));

const ToolGroups = ({ groups }) =>
  groups.map((names, index) => (
    <ToolGroup key={index}>
      {index > 0 && <Handle />}
      <Tools names={names} />
    </ToolGroup>
  ));

const PickCell = ({ label, value, fill = 'white' }) => (
  <Cell>
    <CellPick>
      <CellSelect aria-label={label} fill={fill} defaultValue={value}>
        <option>{value}</option>
      </CellSelect>
      <CellArrow>
        <Triangle small />
      </CellArrow>
    </CellPick>
  </Cell>
);

const LayerRow = ({ layer, number }) => {
  const surface = layer.type === 'SURFACE';
  const plane = layer.type === 'PLANE';
  const metal = plane || layer.type === 'CONDUCTOR';
  return (
    <tr>
      <Cell off align="right">{number}</Cell>
      <Cell off={surface || layer.type === 'CONDUCTOR'} focused={layer.focused}>{layer.name}</Cell>
      {surface ? <Cell>{layer.type}</Cell> : <PickCell label="Type" value={layer.type} fill={FILLS[layer.type]} />}
      {surface ? <Cell off>{layer.material}</Cell> : <PickCell label="Material" value={layer.material} />}
      <Cell off={surface} align="right">{layer.thickness}</Cell>
      <Cell off={surface} align="right">{layer.conductivity}</Cell>
      <Cell>{layer.dielectric}</Cell>
      <Cell>{layer.loss}</Cell>
      <Cell off={!metal}>{metal && <CellBox type="checkbox" aria-label="Negative Artwork" />}</Cell>
      <Cell off={!plane}>{plane && <CellBox type="checkbox" aria-label="Shield" defaultChecked />}</Cell>
      <Cell off={!layer.width} align="right">{layer.width}</Cell>
    </tr>
  );
};

const LayerGrid = () => (
  <GridFrame>
    <GridMain>
      <LayerTable>
        <colgroup>
          {COLUMNS.map(([label, width]) => (
            <col key={label} width={width} />
          ))}
        </colgroup>
        <thead>
          <tr>
            {COLUMNS.map(([label]) => (
              <HeadCell key={label}>
                <HeadLabel>{label}</HeadLabel>
              </HeadCell>
            ))}
          </tr>
        </thead>
        <tbody>
          {LAYERS.map((layer, index) => (
            <LayerRow key={index} layer={layer} number={index + 1} />
          ))}
        </tbody>
      </LayerTable>
    </GridMain>
    <VerticalScroll>
      <ScrollButton type="button" aria-label="Scroll up"><Triangle dir="up" /></ScrollButton>
      <ScrollButton type="button" aria-label="Vertical thumb" />
      <Track />
      <ScrollButton type="button" aria-label="Scroll down"><Triangle /></ScrollButton>
    </VerticalScroll>
    <HorizontalScroll>
      <ScrollButton type="button" aria-label="Scroll left"><Triangle dir="left" /></ScrollButton>
      <ScrollButton type="button" aria-label="Horizontal thumb" />
      <Track />
      <ScrollButton type="button" aria-label="Scroll right"><Triangle dir="right" /></ScrollButton>
    </HorizontalScroll>
    <ScrollCorner />
    <Marker />
  </GridFrame>
);

const SelectField = ({ id, label, value }) => (
  <Field>
    <FieldName htmlFor={id}>{label}</FieldName>
    <Select id={id} defaultValue={value}>
      <option>{value}</option>
    </Select>
    <SelectArrow>
      <Triangle />
    </SelectArrow>
  </Field>
);

const CrossSectionDialog = () => (
  <Dialog>
    <DialogTitle>
      <svg width="17" height="18" viewBox="0 0 17 18" aria-hidden="true">
        <path d="M2 2h11v10H2z" fill="white" stroke="#000080" strokeWidth="2" />
        <path d="M4 5h4M9 4v3h3" fill="none" stroke="#000080" />
        <path d="M2 16l4-4 2 2 3-5 1 3 4-7" fill="none" stroke="#ee1515" strokeWidth="2.5" />
        <path d="M2 13h4M7 16h4M11 13h3" stroke="#ee1515" strokeWidth="1.5" />
        <path d="M4 17h3M10 17h2M14 12h2" stroke="black" />
      </svg>
      <DialogName>Layout Cross Section</DialogName>
      <WindowButtons>
        <WindowButton type="button" aria-label="Minimize">
          <svg width="11" height="11"><path d="M0 5.5h11" stroke="#8a8a8a" /></svg>
        </WindowButton>
        <WindowButton type="button" aria-label="Maximize">
          <svg width="11" height="11"><rect x=".5" y=".5" width="9" height="9" fill="none" stroke="#8a8a8a" /></svg>
        </WindowButton>
        <WindowButton type="button" aria-label="Close">
          <svg width="11" height="11"><path d="M.5.5l10 10M10.5.5l-10 10" stroke="#8a8a8a" /></svg>
        </WindowButton>
      </WindowButtons>
    </DialogTitle>
    <DialogBody>
      <LayerGrid />
      <Panels>
        <TotalPanel>
          <FieldName htmlFor="total">Total Thickness:</FieldName>
          <TotalValue id="total">28.8 MIL</TotalValue>
        </TotalPanel>
        <SetPanel>
          <SelectField id="layer-type" label="Layer Type" value="ALL" />
          <SelectField id="material" label="Material" value="ALL" />
          <SelectField id="field" label="Field to Set" value="Thickness" />
          <ValueField>
            <FieldName htmlFor="value">Value to Set</FieldName>
            <TextBox id="value" type="text" />
          </ValueField>
          <UpdateButton type="button">Update Fields</UpdateButton>
        </SetPanel>
        <ShowPanel>
          <ShowLine><ShowBox type="checkbox" />Show Single Impedance</ShowLine>
          <ShowLine><ShowBox type="checkbox" />Show Diff Impedance</ShowLine>
        </ShowPanel>
      </Panels>
      <ButtonRow>
        <Button type="button" main>OK</Button>
        <Button type="button">Apply</Button>
        <Button type="button">Cancel</Button>
        <MiddleButtons>
          <Button type="button" wide>{'Refresh Materials ->'}</Button>
        </MiddleButtons>
        <RightButtons>
          <Button type="button">Report</Button>
          <Button type="button">Help</Button>
        </RightButtons>
      </ButtonRow>
    </DialogBody>
  </Dialog>
);

export default function App() {
  return (
    <Page>
      <GlobalStyle />
      <TitleBar>{'n XL (legacy): pcb2.brd   Project: G:/test'}</TitleBar>
      <MenuBar>
        {MENUS.map(name => (
          <MenuEntry key={name}>
            <MenuButton type="button" active={name === 'Set&up'}>
              <Hotkey text={name} />
            </MenuButton>
            {name === 'Set&up' && <SetupMenu />}
          </MenuEntry>
        ))}
      </MenuBar>
      <Toolbars>
        <Toolbar shift="-16px">
          <Tools names={['move', 'copy', 'delete']} />
          <Spacer size={228} />
          <ToolGroups groups={TOP_TOOLS} />
        </Toolbar>
        <Toolbar shift="-1px" tall>
          <Tools names={['waveBoard', 'disabled', 'greenBoard']} />
          <Spacer size={200} />
          <ToolGroups groups={BOTTOM_TOOLS} />
        </Toolbar>
      </Toolbars>
      <CrossSectionDialog />
      <Arrow x={320} y={155} width="100" height="104">
        <path
          d="M6 8l3-1 41 35 27 28 6-4q2-1 3 1l8 29q0 2-3 2l-28-10q-2-1 0-3l4-5-7-8z"
          fill="#f94b46"
          stroke="#f94b46"
          strokeWidth="2"
          strokeLinejoin="round"
        />
      </Arrow>
      <Arrow x={580} y={505} width="132" height="90">
        <path
          d="M4 8l2-3 97 54 4-5q2-1 4 1l15 27q0 2-2 2l-31-2q-2-1 0-3l3-6z"
          fill="#f94b46"
          stroke="#f94b46"
          strokeWidth="2"
          strokeLinejoin="round"
        />
      </Arrow>
      <Note>更改PCB的层叠结构</Note>
      <Watermark>CSDN @突然到硬件</Watermark>
    </Page>
  );
}
